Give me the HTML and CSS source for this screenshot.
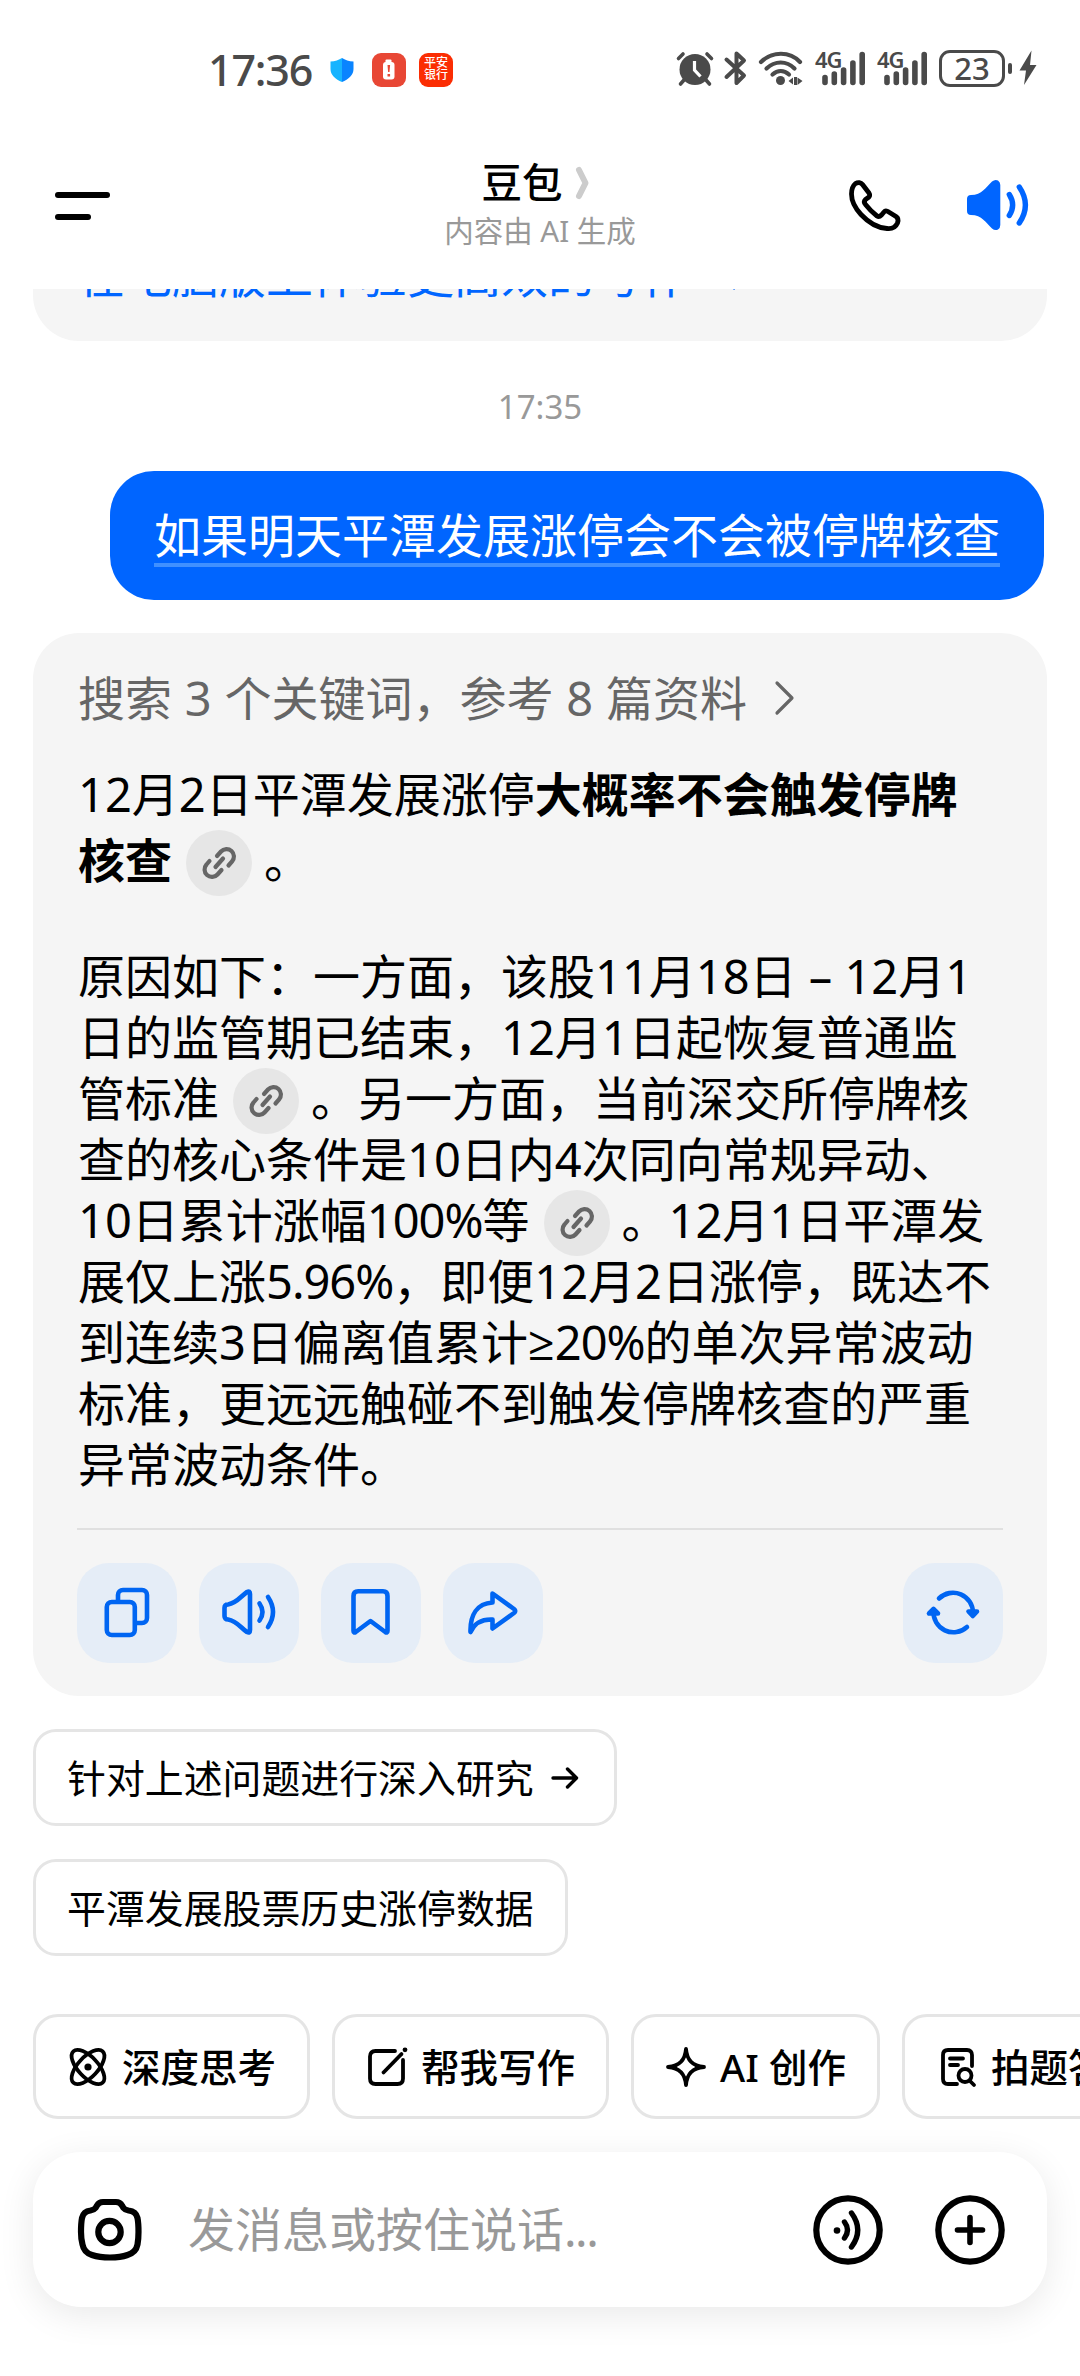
FILE: index.html
```html
<!DOCTYPE html>
<html lang="zh-CN">
<head>
    <meta charset="UTF-8">
    <meta name="viewport" content="width=device-width, initial-scale=1.0">
    <title>豆包</title>
    <link rel="stylesheet" href="styles.css">
</head>
<body>
    <div class="status-bar">
        <span class="clock">17:36</span>
        <svg class="shield" width="24" height="24" viewBox="0 0 24 24">
            <path d="M12 0C15 2 19 3.300 23.500 3.500V11C23.500 17 18.500 21.500 12 24Z" fill="#0a84ff"/>
            <path d="M12 0C9 2 5 3.300 .5 3.500V11C.5 17 5.500 21.500 12 24Z" fill="#17b4ff"/>
        </svg>
        <span class="app-icon battery-app">
            <svg width="34" height="34" viewBox="0 0 34 34">
                <rect x="13.500" y="6.500" width="6" height="4" rx="1" fill="#fff"/>
                <rect x="11" y="9" width="11.500" height="17.500" rx="3" fill="#fff"/>
                <path d="M15.500 12h2.600l-.6 7h-1.400zM15.500 21h2.600v2.500h-2.600z" fill="#e84735"/>
            </svg>
        </span>
        <span class="app-icon bank-app"><span>平安</span><span>银行</span></span>

        <div class="status-right">
            <svg class="alarm" width="38" height="36" viewBox="0 0 38 36">
                <circle cx="19" cy="19.500" r="15.500" fill="#4a4a4a"/>
                <path d="M2.500 8.500L7 4M35.500 8.500L31 4M8 30l-3.500 4M30 30l3.500 4" stroke="#4a4a4a" stroke-width="3.600" stroke-linecap="round"/>
                <path d="M18.500 11v9l6 6.500" fill="none" stroke="#fff" stroke-width="3.200"/>
            </svg>
            <svg class="bluetooth" width="24" height="36" viewBox="0 0 24 36">
                <path d="M2.500 9.500L20 25.500 12.500 33V3.500L20 10.500 2.500 27" fill="none" stroke="#4a4a4a" stroke-width="4" stroke-linecap="round" stroke-linejoin="round"/>
            </svg>
            <svg class="wifi" width="46" height="36" viewBox="0 0 46 36">
                <g fill="none" stroke="#4a4a4a" stroke-width="4.200" stroke-linecap="round">
                    <path d="M3 12C14 1 32 1 42 12"/>
                    <path d="M8.500 18.500C17 10.500 28.500 10.500 36.500 18.500"/>
                    <path d="M14.500 24.500C19.500 20 26 20 31 24.500"/>
                </g>
                <circle cx="22.500" cy="30.500" r="4.500" fill="#4a4a4a"/>
                <path d="M30.500 31l4.500-3.500v7zM36 27l3 0v8h-3zM44.500 31l-5 4v-7.500z" fill="#4a4a4a"/>
            </svg>
            <span class="signal">
                <b>4G</b>
                <svg width="44" height="36" viewBox="0 0 44 36">
                    <path d="M3 27.500v5M12.300 24v8.500M21.600 20v12.500M30.900 13v19.500M40.200 4.500v28" stroke="#4a4a4a" stroke-width="5.600" stroke-linecap="round"/>
                </svg>
            </span>
            <span class="signal">
                <b>4G</b>
                <svg width="44" height="36" viewBox="0 0 44 36">
                    <path d="M3 27.500v5M12.300 24v8.500M21.600 20v12.500M30.900 13v19.500M40.200 4.500v28" stroke="#4a4a4a" stroke-width="5.600" stroke-linecap="round"/>
                </svg>
            </span>
            <span class="battery">23</span>
            <span class="battery-cap"></span>
            <svg class="bolt" width="18" height="36" viewBox="0 0 18 36">
                <path d="M12.500 .5L.5 20.500H7L5 35 17.500 15H11z" fill="#4a4a4a"/>
            </svg>
        </div>
    </div>

    <header class="header">
        <div class="menu"><i></i><i></i></div>
        <div class="heading">
            <h1>豆包
                <svg width="16" height="34" viewBox="0 0 16 34"><path d="M4 4l6.500 13L4 30" fill="none" stroke="#ccc" stroke-width="6" stroke-linecap="round" stroke-linejoin="round"/></svg>
            </h1>
            <p>内容由 AI 生成</p>
        </div>
        <div class="header-actions">
            <svg width="54" height="54" viewBox="0 0 54 54">
                <path d="M7.500 4.500C10 3 13 3.500 14.500 5.500L21 14C22 15.500 22 16.500 21 18L17.500 20.500C16 22 16.200 24 17.500 25.500C21 30 24.500 33.500 29 37C30.500 38 32 37.500 33.500 36L36 33C37 31.700 38 31.600 39.500 32.300L48 37.500C50.500 39.200 50.500 41.500 49.500 44C47.500 48.500 43.500 50 39 49.500C30 49 20 43 13 35.500C7 29 3.500 22 3.500 15C3.500 10.500 4.500 7 7.500 4.500Z" fill="none" stroke="#000" stroke-width="4.800" stroke-linejoin="round"/>
            </svg>
            <svg width="64" height="52" viewBox="0 0 64 52">
                <path d="M1 20Q1 16 5 16C16 16 20 8 26 2.500Q29 0 32 1.500Q34.300 3 34.300 6V46Q34.300 49 32 50.500Q29 52 26 49.500C20 44 16 36 5 36Q1 36 1 32Z" fill="#0065ff"/>
                <path d="M43.300 15.500Q50 26 43.300 36.500M53.300 8Q65.500 26 53.300 44" fill="none" stroke="#0065ff" stroke-width="5.400" stroke-linecap="round"/>
            </svg>
        </div>
    </header>

    <main class="chat">
        <div class="card previous">
            <a>在电脑版上体验更高效的写作<svg width="18" height="32" viewBox="0 0 18 32"><path d="M2 2l13 14L2 30" fill="none" stroke="#0065ff" stroke-width="3"/></svg></a>
        </div>
        <time class="time">17:35</time>
        <div class="question"><span>如果明天平潭发展涨停会不会被停牌核查</span></div>

        <article class="card answer">
            <div class="sources">
                搜索 3 个关键词，参考 8 篇资料
                <svg width="20" height="34" viewBox="0 0 20 34"><path d="M2 2l15 15L2 32" fill="none" stroke="#666" stroke-width="3.200" stroke-linecap="round" stroke-linejoin="round"/></svg>
            </div>
            <p class="summary">
                12月2日平潭发展涨停<strong>大概率不会触发停牌</strong><br>
                <strong>核查</strong><span class="ref"><svg width="36" height="36" viewBox="0 0 36 36"><use href="#link"/></svg></span>。
            </p>
            <p class="reason">
                原因如下：一方面，该股11月18日 – 12月1<br>
                日的监管期已结束，12月1日起恢复普通监<br>
                管标准<span class="ref"><svg width="36" height="36" viewBox="0 0 36 36"><use href="#link"/></svg></span>。另一方面，当前深交所停牌核<br>
                查的核心条件是10日内4次同向常规异动、<br>
                10日累计涨幅<span class="num">100%</span>等<span class="ref"><svg width="36" height="36" viewBox="0 0 36 36"><use href="#link"/></svg></span>。12月1日平潭发<br>
                展仅上涨<span class="num">5.96%</span>，即便12月2日涨停，既达不<br>
                到连续3日偏离值累计<span class="sign">≥</span><span class="num">20%</span>的单次异常波动<br>
                标准，更远远触碰不到触发停牌核查的严重<br>
                异常波动条件。
            </p>
            <div class="tools">
                <button>
                    <svg viewBox="0 0 60 60">
                        <rect x="9.800" y="19" width="28" height="33" rx="5"/>
                        <path d="M21 18V12a5 5 0 0 1 5-5h19a5 5 0 0 1 5 5v23a5 5 0 0 1-5 5h-6"/>
                    </svg>
                </button>
                <button>
                    <svg viewBox="0 0 60 60">
                        <path d="M5.500 25Q5.500 21.500 9 21.500C18 20 22 13 28 9Q31 7.500 31 11V47Q31 50.500 28 49C22 45 18 38 9 36.500Q5.500 36.500 5.500 33Z"/>
                        <path d="M40.500 20.500Q46.500 29 40.500 37.500M49 14Q59 29 49 44"/>
                    </svg>
                </button>
                <button>
                    <svg viewBox="0 0 60 60">
                        <path d="M12.500 48V13q0-4.700 4.700-4.700H42q4.500 0 4.500 4.700V48q0 2.500-2.200 1L29.500 38 14.700 49q-2.200 1.500-2.200-1Z"/>
                    </svg>
                </button>
                <button>
                    <svg viewBox="0 0 60 60">
                        <path d="M29.500 10.500L51 26q2.500 2 0 4L29.500 45.500V36.500C18 36 11.500 40 7.500 49C7 32 14 20.500 29.500 19.500Z"/>
                    </svg>
                </button>
                <button class="refresh">
                    <svg viewBox="0 0 60 60">
                        <path d="M16 15.500A20 20 0 0 1 50 30M44 44A20 20 0 0 1 10.500 28"/>
                        <path class="solid" d="M45.500 28.500h8.500l-4.200 4.500zM6 30.500h9l-4.500-4.500z"/>
                    </svg>
                </button>
            </div>
        </article>

        <div class="suggestions">
            <button class="suggestion"><span>针对上述问题进行深入研究</span>
                <svg width="28" height="24" viewBox="0 0 28 24"><path d="M2 12h23M16.500 3l9 9-9 9" fill="none" stroke="#000" stroke-width="3.400" stroke-linecap="round" stroke-linejoin="round"/></svg>
            </button>
            <button class="suggestion"><span>平潭发展股票历史涨停数据</span></button>
        </div>

        <div class="skills">
            <button>
                <svg viewBox="0 0 40 40">
                    <ellipse cx="20" cy="20" rx="21.500" ry="10" transform="rotate(47 20 20)"/>
                    <ellipse cx="20" cy="20" rx="21.500" ry="10" transform="rotate(-47 20 20)"/>
                    <circle cx="20" cy="20" r="3.600" fill="#000" stroke="none"/>
                </svg>
                <span>深度思考</span>
            </button>
            <button>
                <svg viewBox="0 0 40 40">
                    <path d="M28 4H8.500q-5.500 0-5.500 5.500v22Q3 37 8.500 37h22q5.500 0 5.500-5.500V13"/>
                    <path d="M16.500 25.500L34.500 7"/>
                    <circle cx="38" cy="2.800" r="2.400" fill="#000" stroke="none"/>
                </svg>
                <span>帮我写作</span>
            </button>
            <button>
                <svg viewBox="0 0 40 40">
                    <path d="M20 2C21 13.500 26.500 19 38 20C26.500 21 21 26.500 20 38C19 26.500 13.500 21 2 20C13.500 19 19 13.500 20 2Z"/>
                </svg>
                <span>AI 创作</span>
            </button>
            <button>
                <svg viewBox="0 0 40 40">
                    <path d="M35 19V8q0-5-5-5H11Q6 3 6 8v24q0 5 5 5h9M13 11.500h13M13 18h8"/>
                    <circle cx="28" cy="28.500" r="6.500"/>
                    <path d="M33 34l4 4"/>
                </svg>
                <span>拍题答疑</span>
            </button>
        </div>
    </main>

    <footer class="composer">
        <svg width="70" height="66" viewBox="0 0 70 66">
            <path d="M28 5h13q4 0 6 3.500l1.500 2.500q1.500 2 5 2.500 7.500.8 9 7.500 1 5 1 14 0 7-1 12.500-1.500 8-10 10.500-7 2.500-17.500 2.500T17 58q-8-2.500-9.500-10.500Q6 42 6 35q0-9 1-14 1.500-6.700 8.500-7.500 3.500-.5 5-2.500l1.500-2.500Q24 5 28 5Z"/>
            <circle cx="34.500" cy="35" r="11.200"/>
        </svg>
        <span class="placeholder">发消息或按住说话<i>...</i></span>
        <svg class="voice" width="70" height="70" viewBox="0 0 70 70">
            <circle cx="35" cy="35" r="31.700"/>
            <circle cx="24" cy="35.500" r="3.300" class="dot"/>
            <path d="M31.500 27Q37.500 35 31.500 43M38.500 18Q51 35 38.500 52" stroke-width="5.400"/>
        </svg>
        <svg width="70" height="70" viewBox="0 0 70 70">
            <circle cx="35" cy="35" r="31.700"/>
            <path d="M35 22.500v25M22.500 35h25" stroke-width="5.600"/>
        </svg>
    </footer>

    <!-- shared link glyph -->
    <svg class="sprite">
        <g id="link" fill="none" stroke="#666" stroke-width="4.200" stroke-linecap="round" stroke-linejoin="round">
            <path d="M16 11L20 6.500A7.300 7.300 0 0 1 31 16.500L27.500 20.500"/>
            <path d="M20.500 25L16.500 29.500A7.300 7.300 0 0 1 5.500 19.500L8.500 16"/>
            <path d="M14.500 22L22 13.500"/>
        </g>
    </svg>
</body>
</html>
```
FILE: styles.css
```css
* {
    box-sizing: border-box;
}
body {
    margin: 0;
    width: 1080px;
    height: 2376px;
    display: flex;
    flex-direction: column;
    background: #fff;
    color: #000;
    font-family: "Noto Sans", "Noto Sans CJK SC", sans-serif;
    overflow: hidden;
}
h1, p {
    margin: 0;
    font-weight: 400;
}
svg {
    display: block;
    flex: none;
    overflow: visible;
}
button {
    font: inherit;
    color: inherit;
    background: none;
    border: none;
    padding: 0;
}

/* status bar */
.status-bar {
    height: 123px;
    padding: 15px 43px 0 208px;
    display: flex;
    align-items: flex-start;
    color: #4a4a4a;
}
.clock {
    width: 122px;
    margin-top: 31px;
    font-size: 43px;
    line-height: 48px;
    font-weight: 500;
    letter-spacing: -1.2px;
}
.shield {
    margin: 43px 18px 0 0;
}
.app-icon {
    width: 34px;
    height: 34px;
    margin: 38px 13px 0 0;
    border-radius: 9px;
    background: #e84735;
}
.bank-app {
    display: flex;
    flex-direction: column;
    align-items: center;
    padding-top: 4px;
    background: #fb2d03;
    color: #fff;
    font-size: 12px;
    line-height: 12px;
    font-weight: 500;
}
.status-right {
    margin: 35px 0 0 auto;
    display: flex;
    height: 36px;
}
.alarm {
    margin-right: 10px;
}
.bluetooth {
    margin-right: 10px;
}
.wifi {
    margin-right: 10px;
}
.signal {
    position: relative;
    width: 52px;
    margin-right: 10px;
    padding-left: 8px;
}
.signal b {
    position: absolute;
    left: 1px;
    top: 0;
    font-size: 22px;
    line-height: 19px;
    font-weight: 600;
    letter-spacing: -1px;
}
.battery {
    width: 66px;
    height: 37px;
    margin-left: 1px;
    border: 3px solid #4a4a4a;
    border-radius: 11px;
    font-size: 31px;
    line-height: 31px;
    font-weight: 500;
    text-align: center;
}
.battery-cap {
    width: 4px;
    height: 11px;
    margin: 13px 7px 0 3px;
    border-radius: 2px;
    background: #4a4a4a;
}

/* header */
.header {
    height: 166px;
    padding: 0 50px 0 55px;
    display: grid;
    grid-template-columns: 245px 1fr 250px;
}
.menu {
    padding-top: 69px;
}
.menu i {
    display: block;
    width: 55px;
    height: 6px;
    border-radius: 3px;
    background: #000;
}
.menu i + i {
    width: 36px;
    margin-top: 16px;
}
.heading {
    padding-top: 35px;
    text-align: center;
}
.heading h1 {
    display: flex;
    justify-content: center;
    align-items: center;
    gap: 12px;
    padding-right: 8px;
    font-size: 40.5px;
    line-height: 50px;
    font-weight: 500;
}
.heading p {
    font-size: 29.5px;
    line-height: 40px;
    margin-top: 3px;
    color: #999;
}
.header-actions {
    display: flex;
    justify-content: flex-end;
    gap: 64px;
    padding-top: 56px;
}

/* conversation */
.chat {
    height: 1863px;
    overflow: hidden;
}
.card {
    margin: 0 33px;
    border-radius: 46px;
    background: #f5f5f5;
}
.previous {
    height: 120px;
    margin-top: -68px;
    padding: 24px 45px;
}
.previous a {
    display: flex;
    align-items: center;
    gap: 42px;
    font-size: 47px;
    line-height: 60px;
    color: #0065ff;
}
.time {
    display: block;
    padding-top: 42px;
    height: 130px;
    font-size: 33px;
    line-height: 48px;
    text-align: center;
    color: #999;
}
.question {
    width: 934px;
    height: 129px;
    margin: 0 36px 33px auto;
    padding: 32px 44px 0;
    border-radius: 44px;
    background: #0065ff;
    color: #fff;
    font-size: 47px;
    line-height: 64px;
    white-space: nowrap;
}
.question span {
    display: block;
    height: 64px;
    border-bottom: 4px solid #4090ff;
}
.answer {
    height: 1063px;
    padding: 32px 44px 33px 45px;
    font-size: 47px;
    white-space: nowrap;
}
.sources {
    display: flex;
    align-items: center;
    gap: 28px;
    line-height: 66px;
    word-spacing: 0.6px;
    color: #666;
}
.summary {
    margin-top: 30px;
    line-height: 66px;
}
.reason {
    margin-top: 53px;
    line-height: 61px;
}
.num {
    letter-spacing: -1px;
}
.sign {
    font-family: "Open Sans", Roboto, sans-serif;
}
.ref {
    display: inline-flex;
    width: 66px;
    height: 66px;
    margin: -16px 12px -16px 14px;
    align-items: center;
    justify-content: center;
    vertical-align: -3px;
    border-radius: 50%;
    background: #e6e6e6;
}
.tools {
    display: flex;
    gap: 22px;
    margin: 33px 0 0 -1px;
    padding-top: 33px;
    border-top: 2px solid #e0e0e0;
}
.tools button {
    width: 100px;
    height: 100px;
    padding: 20px;
    border-radius: 32px;
    background: #e5edf7;
}
.tools svg {
    width: 60px;
    height: 60px;
    fill: none;
    stroke: #0065f2;
    stroke-width: 4.6;
    stroke-linecap: round;
    stroke-linejoin: round;
}
.tools .solid {
    fill: #0065f2;
}
.tools .refresh {
    margin-left: auto;
}

/* suggestions and skills */
.suggestions {
    padding: 33px 33px 0;
    display: flex;
    flex-direction: column;
    align-items: flex-start;
    gap: 33px;
}
.suggestion {
    height: 97px;
    padding: 0 31px;
    display: flex;
    align-items: center;
    gap: 17px;
    border: 3px solid #e5e5e5;
    border-radius: 23px;
    font-size: 38.9px;
}
.suggestion span,
.skills span {
    padding-bottom: 4px;
}
.suggestion svg {
    margin-right: 4px;
}
.skills {
    display: flex;
    gap: 22px;
    padding: 58px 0 0 33px;
}
.skills button {
    flex: none;
    height: 105px;
    padding: 0 31px 0 32px;
    display: flex;
    align-items: center;
    gap: 14px;
    border: 3px solid #e5e5e5;
    border-radius: 25px;
    font-size: 38.5px;
    font-weight: 500;
}
.skills svg {
    width: 40px;
    height: 40px;
    fill: none;
    stroke: #000;
    stroke-width: 3.8;
    stroke-linecap: round;
    stroke-linejoin: round;
}

/* input */
.composer {
    height: 155px;
    margin: 0 33px;
    padding: 0 42px 0 42px;
    display: flex;
    align-items: center;
    border-radius: 48px;
    background: #fff;
    box-shadow: 0 8px 36px rgba(0, 0, 0, 0.09);
}
.composer svg {
    fill: none;
    stroke: #000;
    stroke-width: 6.2;
    stroke-linecap: round;
    stroke-linejoin: round;
}
.composer .dot {
    fill: #000;
    stroke: none;
}
.placeholder {
    flex: 1;
    margin-left: 43px;
    padding-bottom: 6px;
    font-size: 47px;
    color: #999;
}
.placeholder i {
    font-style: normal;
    letter-spacing: -1.5px;
}
.voice {
    margin-right: 52px;
}
.sprite {
    position: absolute;
    width: 0;
    height: 0;
}
```
